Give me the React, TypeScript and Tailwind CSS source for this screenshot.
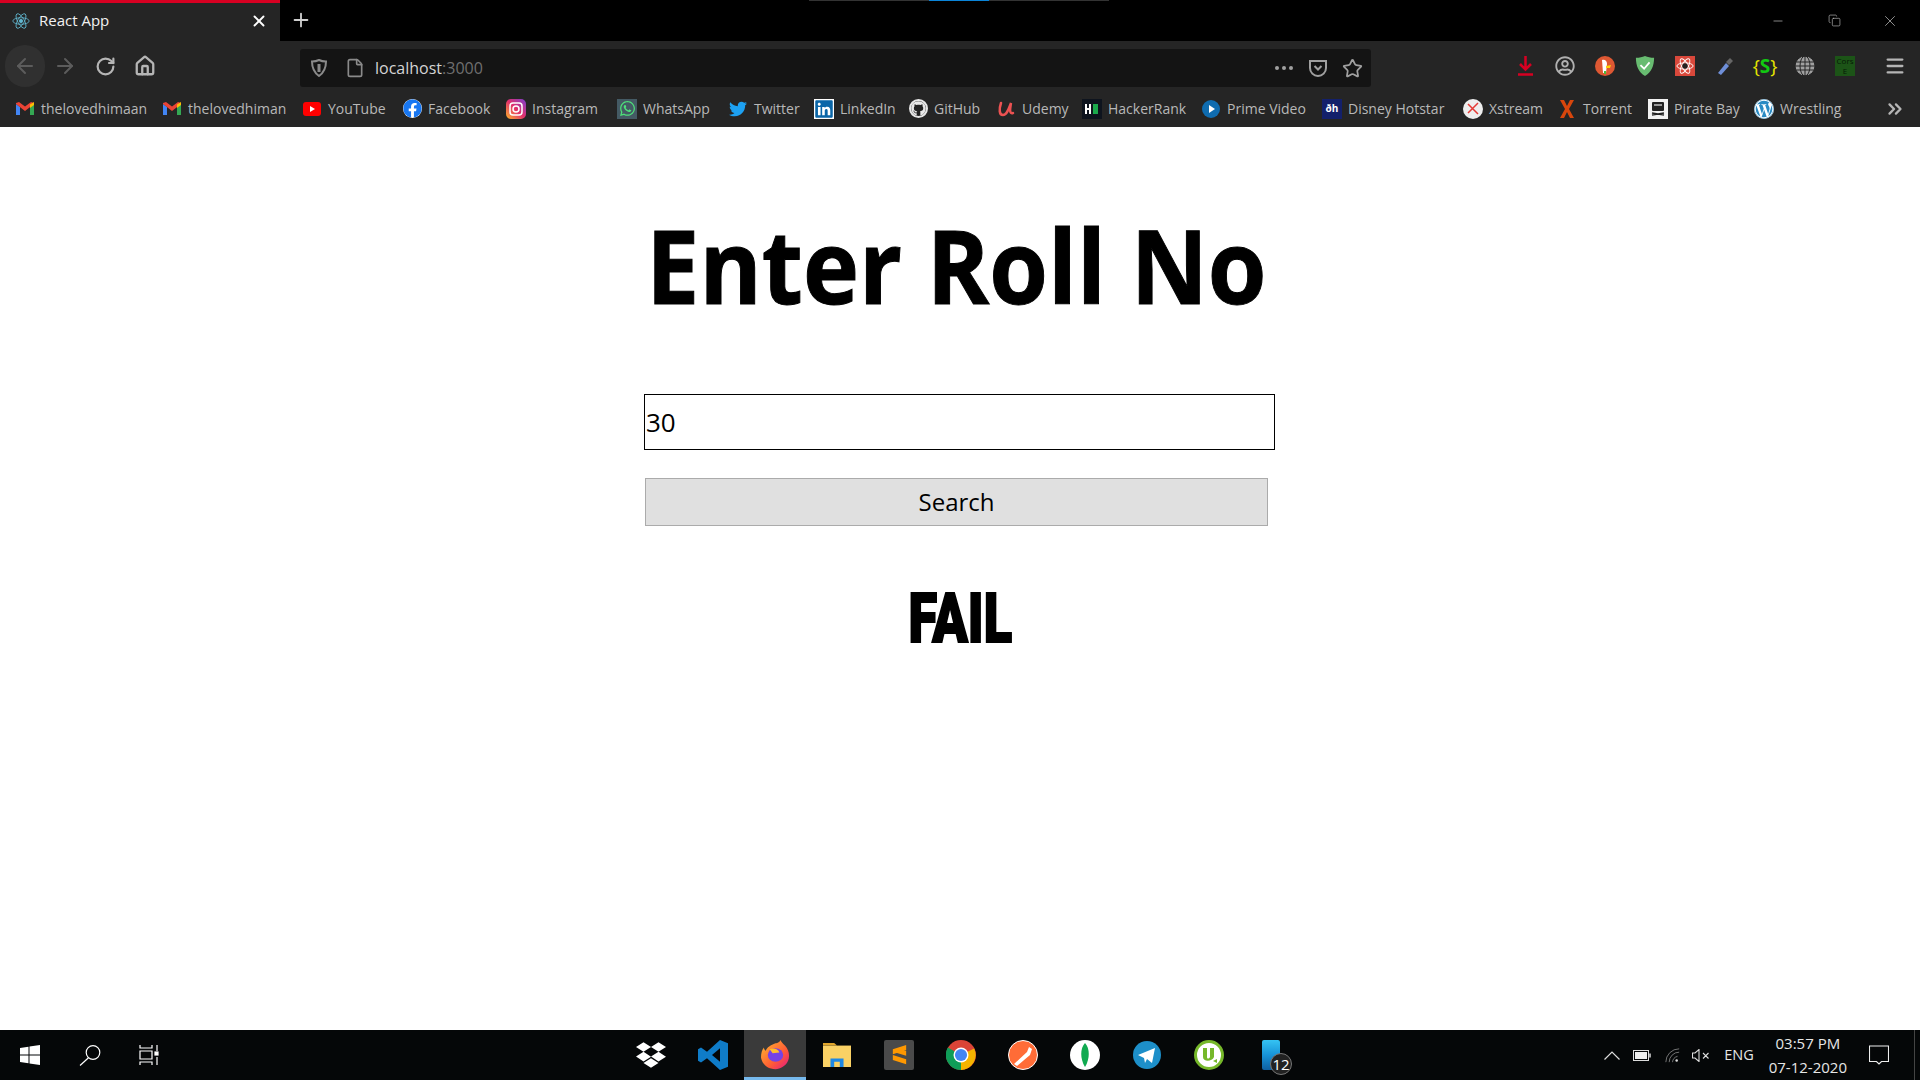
import React from "react";
import { FaFacebook, FaWhatsapp, FaTwitter, FaLinkedin, FaWordpress, FaDropbox, FaRegUserCircle, FaGithub } from "react-icons/fa";
import { ArrowLeft, ArrowRight, RotateCw, Home, File, Star, Menu, ChevronsRight, Plus, X, Minus, Copy } from "lucide-react";

const Gmail = () => (
  <svg width="18" height="14" viewBox="0 0 18 14"><path d="M0 2v11h4V5z" fill="#4285f4"/><path d="M18 2v11h-4V5z" fill="#34a853"/><path d="M0 2 9 9l9-7v-1l-3-1-6 4.500L3 0 0 1z" fill="#ea4335"/><path d="M14 2.500 18 0v3l-4 3z" fill="#fbbc04"/></svg>
);
const Square = ({ bg, children }: { bg: string; children?: React.ReactNode }) => (
  <span className="flex h-[20px] w-[20px] items-center justify-center" style={{ background: bg }}>{children}</span>
);

const bookmarks: { label: string; w: number; icon: React.ReactNode }[] = [
  { label: "thelovedhimaan", w: 147, icon: <Gmail /> },
  { label: "thelovedhiman", w: 140, icon: <Gmail /> },
  { label: "YouTube", w: 100, icon: <svg width="20" height="14" viewBox="0 0 20 14"><rect width="18" height="14" x="1" rx="3" fill="#f00"/><path d="M8 4l5 3-5 3z" fill="#fff"/></svg> },
  { label: "Facebook", w: 104, icon: <FaFacebook size={19} color="#1877f2" className="rounded-full bg-white" /> },
  { label: "Instagram", w: 111, icon: <svg width="20" height="20" viewBox="0 0 20 20"><defs><linearGradient id="ig" x1="0" y1="1" x2="1" y2="0"><stop offset="0" stopColor="#fdb52a"/><stop offset=".5" stopColor="#e1306c"/><stop offset="1" stopColor="#7b3fd0"/></linearGradient></defs><rect width="20" height="20" rx="5" fill="url(#ig)"/><rect x="4" y="4" width="12" height="12" rx="3" fill="none" stroke="#fff" strokeWidth="1.500"/><circle cx="10" cy="10" r="3" fill="none" stroke="#fff" strokeWidth="1.500"/></svg> },
  { label: "WhatsApp", w: 111, icon: <Square bg="#445a64"><FaWhatsapp size={17} color="#4ee07a" /></Square> },
  { label: "Twitter", w: 86, icon: <FaTwitter size={18} color="#1da1f2" /> },
  { label: "LinkedIn", w: 94, icon: <Square bg="#0a66a8"><FaLinkedin size={20} color="#0a66a8" className="bg-white" /></Square> },
  { label: "GitHub", w: 88, icon: <span className="flex h-[19px] w-[19px] items-center justify-center rounded-full border-2 border-[#e8e8e8] bg-[#222]"><FaGithub size={15} color="#e8e8e8" /></span> },
  { label: "Udemy", w: 86, icon: <svg width="18" height="18" viewBox="0 0 18 18" fill="none" stroke="#ec5252" strokeWidth="2.500" strokeLinecap="round"><path d="M4 3C2 9 2 15 6 15 10 15 12 8 14 3 13 9 12 14 16 13"/></svg> },
  { label: "HackerRank", w: 119, icon: <Square bg="#0e141e"><svg width="14" height="10" viewBox="0 0 14 10"><path d="M0 0h2v4h2V0h2v10H4V6H2v4H0z" fill="#fff"/><rect x="8" y="0" width="5" height="10" fill="#1ba94c"/></svg></Square> },
  { label: "Prime Video", w: 121, icon: <svg width="20" height="20" viewBox="0 0 20 20"><circle cx="10" cy="10" r="9" fill="#0f6cb0"/><path d="M8 6l6 4-6 4z" fill="#fff"/></svg> },
  { label: "Disney Hotstar", w: 141, icon: <span className="flex h-[20px] w-[20px] items-center justify-center bg-[#13206b] text-[10px] font-bold text-white">ðh</span> },
  { label: "Xstream", w: 94, icon: <svg width="20" height="20" viewBox="0 0 20 20"><circle cx="10" cy="10" r="10" fill="#eee"/><path d="M5 5l10 10M15 4L5 14" stroke="#e53935" strokeWidth="1.500"/></svg> },
  { label: "Torrent", w: 91, icon: <svg width="16" height="18" viewBox="0 0 16 18"><path d="M1 0h4l3 6 3-6h4l-5 9 5 9h-4l-3-6-3 6H1l5-9z" fill="#d8460c"/></svg> },
  { label: "Pirate Bay", w: 106, icon: <Square bg="#f2f2f2"><svg width="16" height="16" viewBox="0 0 16 16"><rect x="2" y="1" width="12" height="9" rx="1" fill="#222"/><path d="M4 4h8M2 14l12-2M14 14 2 12" stroke="#222" strokeWidth="1.500"/><rect x="4" y="3" width="8" height="2" fill="#999"/></svg></Square> },
  { label: "Wrestling", w: 130, icon: <FaWordpress size={20} color="#2a8bc4" className="rounded-full bg-white" /> },
];

const ToolIcon = ({ children }: { children: React.ReactNode }) => (
  <span className="flex h-[20px] w-10 items-center justify-center">{children}</span>
);

const TaskApp = ({ children, active }: { children: React.ReactNode; active?: boolean }) => (
  <span className={active ? "flex h-full w-[62px] items-center justify-center border-b-[3px] border-[#76b9ed] bg-[#3a3a3a] pt-[3px]" : "flex h-full w-[62px] items-center justify-center"}>{children}</span>
);

export default function App() {
  return (
    <div className="relative flex h-[1080px] w-[1920px] flex-col overflow-hidden bg-white font-['Open_Sans','Noto_Sans',sans-serif]">
      <div className="absolute left-[809px] top-0 h-px w-[300px] bg-[#333]"><div className="ml-[120px] h-px w-[60px] bg-[#0a84d8]" /></div>

      {/* title bar */}
      <div className="flex h-[41px] shrink-0 items-stretch bg-black">
        <div className="flex w-[280px] items-center border-t-[3px] border-[#d70022] bg-[#252525] pb-[3px] pl-[12px] pr-[12px]">
          <svg width="18" height="18" viewBox="-11 -11 22 22" fill="none" stroke="#61b6cf" strokeWidth="1"><ellipse rx="10" ry="4"/><ellipse rx="10" ry="4" transform="rotate(60)"/><ellipse rx="10" ry="4" transform="rotate(120)"/><circle r="2" fill="#61b6cf"/></svg>
          <span className="ml-[9px] flex-1 text-[15px] text-[#f2f2f2]">React App</span>
          <X size={18} color="#fff" strokeWidth={2.500} />
        </div>
        <div className="flex w-[42px] items-center justify-center pb-[1px]"><Plus size={22} color="#cfcfcf" strokeWidth={2} /></div>
        <div className="flex flex-1 items-center justify-end">
          <span className="flex w-[57px] justify-center"><Minus size={14} color="#bbb" strokeWidth={1.200} /></span>
          <span className="flex w-[57px] justify-center"><Copy size={13} color="#bbb" strokeWidth={1.200} /></span>
          <span className="flex w-[57px] justify-center pr-1"><X size={18} color="#bbb" strokeWidth={1} /></span>
        </div>
      </div>

      {/* toolbar */}
      <div className="flex h-[46px] shrink-0 items-center bg-[#252525] pl-[5px] pt-[4px]">
        <span className="flex h-[42px] w-10 items-center justify-center rounded-full bg-[#303030]"><ArrowLeft size={24} color="#5c5c5c" strokeWidth={2} /></span>
        <span className="flex w-10 justify-center"><ArrowRight size={24} color="#5c5c5c" strokeWidth={2} /></span>
        <span className="flex w-10 justify-center"><RotateCw size={21} color="#b5b5b5" strokeWidth={2.500} /></span>
        <span className="flex w-10 justify-center"><Home size={22} color="#b5b5b5" strokeWidth={2.500} /></span>
        <div className="ml-[135px] flex h-[38px] w-[1071px] items-center self-end rounded-[3px] bg-[#141414] pl-[11px] pr-[8px]">
          <svg width="16" height="18" viewBox="0 0 16 18" fill="none" stroke="#8a8a8a" strokeWidth="2"><path d="M8 1c2 1 4 1.500 7 1.500 0 7-2 11-7 14.500C3 13.500 1 9.500 1 2.500 4 2.500 6 2 8 1z"/><path d="M8 5v8" strokeWidth="3"/></svg>
          <File size={20} color="#8a8a8a" strokeWidth={2} className="ml-[18px]" />
          <span className="ml-[10px] flex-1 text-[16px] text-[#d4d4d4]">localhost<span className="text-[#6f6f6f]">:3000</span></span>
          <span className="flex gap-[3px]"><i className="h-[4px] w-[4px] rounded-full bg-[#a0a0a0]" /><i className="h-[4px] w-[4px] rounded-full bg-[#a0a0a0]" /><i className="h-[4px] w-[4px] rounded-full bg-[#a0a0a0]" /></span>
          <svg className="ml-[15px]" width="20" height="20" viewBox="0 0 20 20" fill="none" stroke="#a0a0a0" strokeWidth="2"><path d="M2 3h16v7a8 8 0 0 1-16 0z"/><path d="M6.500 8l3.500 3.500L13.500 8"/></svg>
          <Star size={21} color="#a0a0a0" strokeWidth={2} className="ml-[14px]" />
        </div>
        <div className="ml-[134px] flex items-center">
          <ToolIcon><svg width="15" height="20" viewBox="0 0 15 20" fill="none" stroke="#d70022" strokeWidth="2.500"><path d="M7.500 0v13M2 8l5.500 5.500L13 8"/><path d="M0 18.500h15"/></svg></ToolIcon>
          <ToolIcon><FaRegUserCircle size={20} color="#b0b0b0" /></ToolIcon>
          <ToolIcon><svg width="20" height="20" viewBox="0 0 20 20"><circle cx="10" cy="10" r="10" fill="#de5833"/><path d="M7 4c3-1 5 1 5 4l-1 9H8z" fill="#fff"/><path d="M11 10l5-1-1 3-4 0z" fill="#fdd209"/><path d="M9 15l2 0 0 3-2 0z" fill="#4cba3c"/></svg></ToolIcon>
          <ToolIcon><svg width="20" height="20" viewBox="0 0 20 22"><path d="M10 0c3 1 6 2 10 2 0 9-3 16-10 20C3 18 0 11 0 2c4 0 7-1 10-2z" fill="#68bc71"/><path d="M5 10l4 4 6-7" fill="none" stroke="#fff" strokeWidth="2"/></svg></ToolIcon>
          <ToolIcon><span className="flex h-[20px] w-[20px] items-center justify-center bg-[#d9483b]"><svg width="18" height="18" viewBox="-10 -10 20 20" fill="none" stroke="#fff" strokeWidth="1"><ellipse rx="9" ry="3.500"/><ellipse rx="9" ry="3.500" transform="rotate(60)"/><ellipse rx="9" ry="3.500" transform="rotate(120)"/><circle r="3" fill="#222" stroke="none"/></svg></span></ToolIcon>
          <ToolIcon><svg width="20" height="20" viewBox="0 0 20 20"><path d="M3 17l8-10 3 3-8 9z" fill="#6f8fd8"/><path d="M11 6l4-4 3 3-4 4z" fill="#666"/></svg></ToolIcon>
          <ToolIcon><span className="flex items-center text-[19px] leading-none text-[#e6e600]">{"{"}<span className="font-bold text-[#12c912]">S</span>{"}"}</span></ToolIcon>
          <ToolIcon><svg width="20" height="20" viewBox="0 0 20 20" fill="#a0a0a0" stroke="#252525" strokeWidth="1"><circle cx="10" cy="10" r="10"/><ellipse cx="10" cy="10" rx="5" ry="10" fill="none"/><path d="M0 6h20M0 10h20M0 14h20M10 0v20" fill="none"/></svg></ToolIcon>
          <ToolIcon><span className="flex h-[20px] w-[20px] flex-col items-center justify-center bg-[#1c5417] text-[8px] leading-[10px] text-[#061a06]">Cors<span>E</span></span></ToolIcon>
          <span className="ml-[10px] flex w-10 justify-center"><Menu size={22} color="#b5b5b5" strokeWidth={2.500} /></span>
        </div>
      </div>

      {/* bookmarks */}
      <div className="flex h-[40px] shrink-0 items-center bg-[#252525] pl-[15px] pt-[3px]">
        {bookmarks.map((b, i) => (
          <div key={i} style={{ width: b.w }} className="flex shrink-0 items-center gap-[6px] text-[14px] text-[#b8b8b8]">
            <span className="flex h-[20px] w-[20px] shrink-0 items-center justify-center">{b.icon}</span>
            <span className="whitespace-nowrap leading-none">{b.label}</span>
          </div>
        ))}
        <ChevronsRight size={22} color="#b5b5b5" strokeWidth={2.500} />
      </div>

      {/* page */}
      <main className="flex flex-1 flex-col items-center bg-white">
        <div className="flex w-[632px] flex-col items-start">
          <h1 className="mt-[72px] flex h-[132px] w-[625px] justify-center whitespace-nowrap text-[102px] font-bold leading-[132px] text-black [-webkit-text-stroke:1px_black]"><span className="inline-block shrink-0 scale-x-[0.93]">Enter Roll No</span></h1>
          <input readOnly value="30" className="mt-[63px] h-[56px] w-[631px] border border-black px-[1px] text-[26px] text-black outline-none" />
          <button className="ml-[1px] mt-[28px] h-[48px] w-[623px] border border-[#ababab] bg-[#e0e0e0] text-[24px] text-black">Search</button>
          <div className="mt-[50px] w-[633px] text-center text-[68px] leading-[80px] text-black">
            <span className="inline-block scale-x-[0.77] font-['Roboto',sans-serif] font-black [-webkit-text-stroke:2px_black]">FAIL</span>
          </div>
        </div>
      </main>

      {/* taskbar */}
      <div className="flex h-[50px] shrink-0 items-center bg-[#050708] text-white">
        <span className="flex w-[60px] justify-center"><svg width="20" height="20" viewBox="0 0 20 20" fill="#fff"><path d="M0 3l8.500-1.200V9.500H0zM9.500 1.600 20 0v9.500H9.500zM0 10.500h8.500v7.700L0 17zM9.500 10.500H20V20L9.500 18.400z"/></svg></span>
        <span className="flex w-[60px] justify-center"><svg width="22" height="21" viewBox="0 0 22 21" fill="none" stroke="#fff" strokeWidth="1.200"><circle cx="14" cy="7.500" r="6.800"/><path d="M9.500 12.800 1 20.500"/></svg></span>
        <span className="flex w-[58px] justify-center"><svg width="20" height="20" viewBox="0 0 20 20" fill="none" stroke="#fff" strokeWidth="1.200"><path d="M1 0v3h12V0M1 6h12v8H1zM1 20v-3h12v3M18 0v6M18 12v8"/><rect x="16" y="7" width="3" height="3" fill="#fff"/></svg></span>
        <div className="ml-[442px] flex h-full items-center">
          <TaskApp><FaDropbox size={30} color="#fff" /></TaskApp>
          <TaskApp><svg width="30" height="30" viewBox="0 0 30 36" preserveAspectRatio="none"><path d="M22 0l8 4v28l-8 4-13-14-6 5-3-2v-14l3-2 6 5z" fill="#0f7cc9"/><path d="M22 10l-8 8 8 8z" fill="#050708"/></svg></TaskApp>
          <TaskApp active><svg width="29" height="30" viewBox="0 0 30 36" preserveAspectRatio="none"><defs><linearGradient id="ff" x1="0" y1="0" x2="1" y2="1"><stop offset="0" stopColor="#ffbd2e"/><stop offset=".6" stopColor="#ff5c35"/><stop offset="1" stopColor="#e31587"/></linearGradient></defs><path d="M15 4c2 0 5-2 5-4 1 2 2 4 5 7 4 5 5 12 3 18-2 6-8 10-13 10C7 35 1 29 0 21c0-5 1-9 3-12 0 2 1 3 2 4 1-4 5-7 10-9z" fill="url(#ff)"/><circle cx="15" cy="18" r="8" fill="#7542e5"/><path d="M9 11c4-2 9 0 10 4l-7 1z" fill="#ffbd2e"/></svg></TaskApp>
          <TaskApp><svg width="28" height="24" viewBox="0 0 30 28" preserveAspectRatio="none"><path d="M0 0h12l3 3h-15z" fill="#e0a52c"/><rect y="3" width="30" height="25" fill="#fad165"/><path d="M8 28v-10h14v10h-4v-6h-6v6z" fill="#1e88e5"/></svg></TaskApp>
          <TaskApp><span className="flex h-[30px] w-[30px] items-center justify-center rounded-[2px] bg-[#4a4a4a]"><svg width="15" height="20" viewBox="0 0 16 24" fill="#ff9800"><path d="M16 0v6L0 11V5zM0 12l16 5v6L0 18V13zM16 7v6L0 8V7z"/></svg></span></TaskApp>
          <TaskApp><svg width="30" height="30" viewBox="0 0 32 32"><circle cx="16" cy="16" r="16" fill="#db4437"/><path d="M16 16 30 9A16 16 0 0 1 16 32z" fill="#f4b400"/><path d="M16 16 16 32A16 16 0 0 1 2 8z" fill="#0f9d58"/><circle cx="16" cy="16" r="8" fill="#fff"/><circle cx="16" cy="16" r="6.500" fill="#4285f4"/></svg></TaskApp>
          <TaskApp><svg width="30" height="30" viewBox="0 0 30 30"><circle cx="15" cy="15" r="14.500" fill="#ff6c37" stroke="#fff" strokeWidth="1"/><path d="M6 24 19 12l2-5 3 2-2 6-13 11z" fill="#fff"/></svg></TaskApp>
          <TaskApp><svg width="30" height="30" viewBox="0 0 30 30"><circle cx="15" cy="15" r="15" fill="#fff"/><path d="M15 3c5 5 5 16 0 24-5-8-5-19 0-24z" fill="#10aa50"/></svg></TaskApp>
          <TaskApp><svg width="28" height="28" viewBox="0 0 28 28"><circle cx="14" cy="14" r="14" fill="#1d8fc9"/><path d="M5 14 22 7l-3 15-5-4-2 4-1-5z" fill="#fff"/></svg></TaskApp>
          <TaskApp><svg width="30" height="30" viewBox="0 0 30 30"><circle cx="15" cy="15" r="13.500" fill="#fff" stroke="#76b82a" strokeWidth="3"/><path d="M9 8v9c0 5 9 5 11 0V8h-4v9c-1 2-3 2-3 0V8zM19 21l4 2v-4z" fill="#76b82a"/></svg></TaskApp>
          <span className="relative flex h-full w-[62px] items-center justify-center">
            <span className="h-[30px] w-[18px] rounded-[2px] bg-gradient-to-b from-[#35c3f3] via-[#1793d8] to-[#0f5fa0]" />
            <span className="absolute left-[30px] top-[23px] flex h-[22px] w-[22px] items-center justify-center rounded-full border border-[#777] bg-[#222] text-[15px] leading-none text-white">12</span>
          </span>
        </div>
        <div className="ml-auto flex h-full items-center">
          <svg width="16" height="9" viewBox="0 0 16 9" fill="none" stroke="#ddd" strokeWidth="1.200"><path d="M.5 8.500 8 1l7.500 7.500"/></svg>
          <svg className="ml-[13px]" width="18" height="11" viewBox="0 0 18 11" fill="none" stroke="#ddd"><rect x=".5" y=".5" width="15" height="10"/><rect x="2" y="2" width="12" height="7" fill="#eee" stroke="none"/><path d="M17 3.500v4" strokeWidth="1.500"/></svg>
          <svg className="ml-[14px]" width="15" height="15" viewBox="0 0 18 18" fill="none" stroke="#888"><path d="M1 17A16 16 0 0 1 17 1M5 17A12 12 0 0 1 17 5M9 17a8 8 0 0 1 6-7" /><circle cx="14" cy="15" r="1.500" fill="#ddd" stroke="none"/></svg>
          <svg className="ml-[12px]" width="18" height="13" viewBox="0 0 18 13" fill="none" stroke="#ddd" strokeWidth="1.100"><path d="M.5 4h2.500L7 .5v12L3 9H.5zM11 4l5.500 5.500M16.500 4 11 9.500"/></svg>
          <span className="ml-[14px] text-[14.500px] text-[#e6e6e6]">ENG</span>
          <span className="ml-[15px] flex flex-col items-center text-[15px] leading-[24px] text-[#e6e6e6]"><span>03:57 PM</span><span>07-12-2020</span></span>
          <svg className="ml-[22px]" width="20" height="20" viewBox="0 0 20 20" fill="none" stroke="#eee" strokeWidth="1.100"><path d="M.5 1h19v15.500h-7L10 19l-2.500-2.500h-7z"/></svg>
          <span className="ml-[25px] h-full w-px bg-[#444]" />
          <span className="w-[5px]" />
        </div>
      </div>
    </div>
  );
}
